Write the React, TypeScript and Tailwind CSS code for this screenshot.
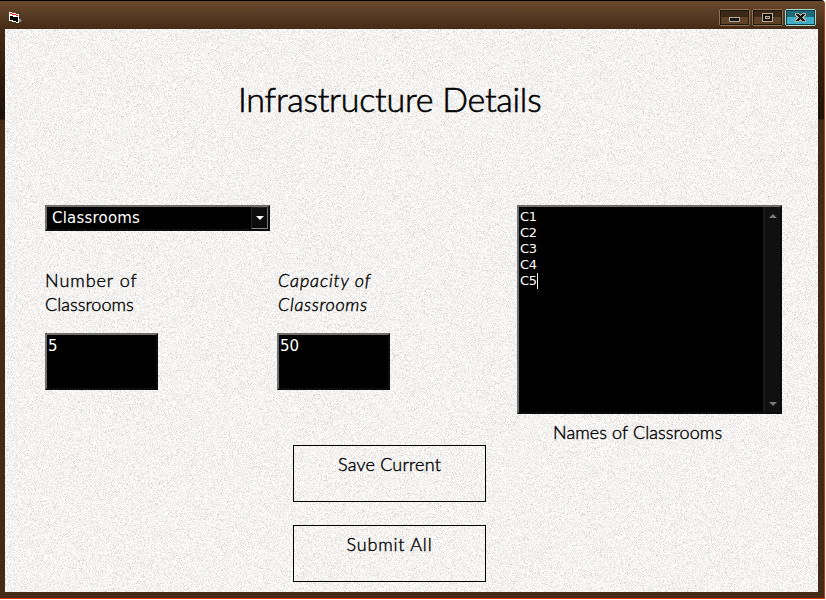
import type { ReactNode } from "react";

const names = ["C1", "C2", "C3", "C4", "C5"];

const sunken =
  "border-2 border-t-[#6f6f6f] border-l-[#6f6f6f] border-r-[#0c0c0c] border-b-[#0c0c0c] bg-black text-white";

const script = "font-light [-webkit-text-stroke:0.4px_#000] whitespace-nowrap";

function Paper() {
  return (
    <svg className="absolute inset-0 h-full w-full" aria-hidden="true">
      <filter id="paper" x="0" y="0" width="100%" height="100%" colorInterpolationFilters="sRGB">
        <feTurbulence type="fractalNoise" baseFrequency="1.37 1.61" numOctaves="3" seed="11" />
        <feColorMatrix
          type="matrix"
          values="0.2 0.2 0.2 0 0.657  0.2 0.2 0.2 0 0.653  0.2 0.2 0.2 0 0.646  0 0 0 0 1"
        />
      </filter>
      <rect width="100%" height="100%" filter="url(#paper)" />
    </svg>
  );
}

function WindowButton({ close, children }: { close?: boolean; children: ReactNode }) {
  return (
    <button
      className={
        close
          ? "h-[17px] w-[31px] rounded-[2px] border border-[#a9d8cf] bg-linear-to-b from-[#1f6a78] from-50% to-[#3faec6] to-50%"
          : "h-[17px] w-[31px] rounded-[2px] border border-[#8c7355] bg-linear-to-b from-[#3b2816] from-50% to-[#5d4227] to-50%"
      }
    >
      <span
        className={
          close
            ? "flex h-full w-full items-center justify-center border border-[#123f48]"
            : "flex h-full w-full items-center justify-center border border-[#23160b]"
        }
      >
        {children}
      </span>
    </button>
  );
}

function TitleBar() {
  return (
    <header className="flex h-[28px] items-start justify-between bg-linear-to-b from-[#6a4a2e] to-[#452b16] pr-[8px] pl-[8px]">
      <svg className="mt-[10px]" width="15" height="13" shapeRendering="crispEdges">
        <path d="M11 8h2v1h1v1h-1v1h-2z" fill="#858585" />
        <path d="M1 1h3v1h4v1h3v9H8v-1H4v-1H1z" fill="#fff" />
        <path d="M2 5h3v1h5v5H8v-1H5V9H2z" fill="#000" />
        <path d="M2 2h2v1H2zM4 3h4v1H4zM8 4h2v1H8z" fill="#f01515" />
      </svg>
      <div className="mt-[8px] flex gap-[2px]">
        <WindowButton>
          <svg width="11" height="5" className="mt-[4px]" shapeRendering="crispEdges">
            <path d="M0 0h11v5H0z" fill="#b7ab98" />
            <path d="M1 1h9v3H1z" fill="#15171c" />
          </svg>
        </WindowButton>
        <WindowButton>
          <svg width="11" height="9" shapeRendering="crispEdges">
            <path d="M0 0h11v9H0z" fill="#b7ab98" />
            <path d="M1 1h9v7H1z" fill="#15120f" />
            <path d="M3 3h5v3H3z" fill="#b7ab98" />
            <path d="M4 4h3v1H4z" fill="#4c3a24" />
          </svg>
        </WindowButton>
        <WindowButton close>
          <svg width="11" height="9" shapeRendering="crispEdges">
            <path d="M0 0h4v1h3V0h4v3h-1v1H9v1h1v1h1v3H7V8H4v1H0V6h1V5h1V4H1V3H0z" fill="#b3aca0" />
            <path d="M1 1h3v1h1v1h1V2h1V1h3v1H9v1H8v1H7v1h1v1h1v1h1v1H7V7H6V6H5v1H4v1H1V7h1V6h1V5h1V4H3V3H2V2H1z" fill="#151515" />
          </svg>
        </WindowButton>
      </div>
    </header>
  );
}

function Field({ label, value, italic }: { label: [string, string]; value: string; italic?: boolean }) {
  return (
    <div className="w-[113px]">
      <div className={`h-[65px] text-[18px] leading-[24px] ${script} ${italic ? "pl-px italic" : ""}`}>
        <div className={italic ? "h-[24px] tracking-[0.85px]" : "h-[24px] tracking-[0.95px]"}>{label[0]}</div>
        <div className={italic ? "h-[24px] tracking-[0.65px]" : "h-[24px] tracking-[0.05px]"}>{label[1]}</div>
      </div>
      <div className={`h-[57px] pl-px font-['DejaVu_Sans',sans-serif] text-[15px] leading-[23px] ${sunken}`}>
        {value}
      </div>
    </div>
  );
}

function Panel({ children, tight }: { children: ReactNode; tight?: boolean }) {
  return (
    <button
      className={`h-[57px] w-[193px] border border-black pb-[19px] text-[18px] leading-[24px] ${script} ${
        tight ? "tracking-[0.2px]" : "tracking-[0.8px]"
      }`}
    >
      {children}
    </button>
  );
}

export default function App() {
  return (
    <div className="h-[600px] w-[826px] overflow-hidden bg-white font-['Lato','Liberation_Sans',sans-serif] text-black">
      <div className="h-[599px] w-[825px] overflow-hidden rounded-tr-[4px] border-t border-r border-b border-t-black border-r-[#cf3514] border-b-[#dc3212] bg-[#452b16]">
        <TitleBar />
        <div className="flex h-[569px] flex-col bg-[linear-gradient(#452b16,#2a190b_60px,#1d1006_90px,#452b16_91px)] pr-[6px] pb-[6px] pl-[5px]">
          <main className="relative h-[563px] w-[813px]">
            <Paper />
            <div className="relative">
              <h1 className="h-[176px] pt-[46px] pl-[233px] text-[34px] leading-[48px] font-light tracking-[-0.25px] whitespace-nowrap [-webkit-text-stroke:0.6px_#000]">
                Infrastructure Details
              </h1>
              <div className="flex h-[240px] pl-[40px]">
                <section className="w-[472px]">
                  <div
                    className={`flex h-[26px] w-[225px] justify-between pl-[5px] font-['DejaVu_Sans',sans-serif] text-[15px] leading-[23px] tracking-[0.2px] ${sunken}`}
                  >
                    <span>Classrooms</span>
                    <span className="flex w-[17px] items-center justify-center border border-t-[#222] border-r-[#777] border-b-[#888] border-l-[#222] bg-[#0c0c0c]">
                      <svg width="8" height="4">
                        <path d="M0 0h8L4 4z" fill="#fff" />
                      </svg>
                    </span>
                  </div>
                  <div className="flex gap-[119px] pt-[37px]">
                    <Field label={["Number of", "Classrooms"]} value="5" />
                    <Field label={["Capacity of", "Classrooms"]} value="50" italic />
                  </div>
                </section>
                <section className="w-[265px]">
                  <div className={`flex h-[209px] justify-between ${sunken}`}>
                    <div className="pt-[2px] pl-px font-['DejaVu_Sans',sans-serif] text-[13px] leading-[16px] tracking-[-0.3px]">
                      {names.map((name, i) => (
                        <div key={name} className="flex h-[16px]">
                          {name}
                          {i === names.length - 1 && <span className="h-[16px] w-px bg-white" />}
                        </div>
                      ))}
                    </div>
                    <div className="flex w-[17px] flex-col items-center justify-between border-l-2 border-[#1a1a1a] bg-[#101010] pt-[7px] pb-[6px]">
                      <svg width="8" height="4">
                        <path d="M4 0l4 4H0z" fill="#777" />
                      </svg>
                      <svg width="8" height="4">
                        <path d="M0 0h8L4 4z" fill="#777" />
                      </svg>
                    </div>
                  </div>
                  <div className={`mt-[6px] pl-[36px] text-[18px] leading-[24px] tracking-[0.1px] ${script}`}>
                    Names of Classrooms
                  </div>
                </section>
              </div>
              <div className="flex flex-col gap-[23px] pl-[288px]">
                <Panel tight>Save Current</Panel>
                <Panel>Submit All</Panel>
              </div>
            </div>
          </main>
        </div>
      </div>
    </div>
  );
}
